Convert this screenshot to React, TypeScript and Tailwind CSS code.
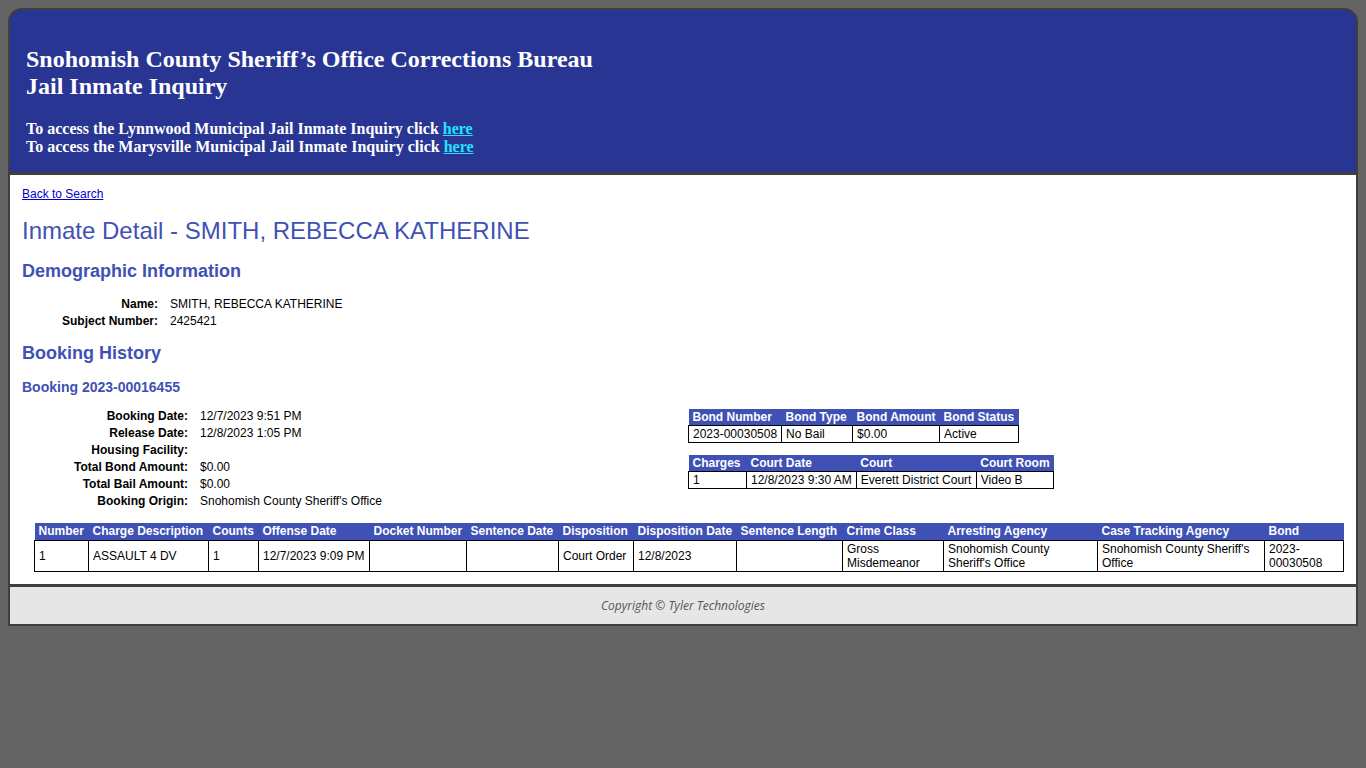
const bonds = [
  { number: "2023-00030508", type: "No Bail", amount: "$0.00", status: "Active" },
];

const courts = [
  { charges: "1", date: "12/8/2023 9:30 AM", court: "Everett District Court", room: "Video B" },
];

const chargeCols = [
  { label: "Number", w: "w-[54px]" },
  { label: "Charge Description", w: "w-[120px]" },
  { label: "Counts", w: "w-[50px]" },
  { label: "Offense Date", w: "w-[111px]" },
  { label: "Docket Number", w: "w-[97px]" },
  { label: "Sentence Date", w: "w-[92px]" },
  { label: "Disposition", w: "w-[75px]" },
  { label: "Disposition Date", w: "w-[103px]" },
  { label: "Sentence Length", w: "w-[106px]" },
  { label: "Crime Class", w: "w-[101px]" },
  { label: "Arresting Agency", w: "w-[154px]" },
  { label: "Case Tracking Agency", w: "w-[167px]" },
  { label: "Bond", w: "w-[79px]" },
];

const chargeRow = [
  "1",
  "ASSAULT 4 DV",
  "1",
  "12/7/2023 9:09 PM",
  "",
  "",
  "Court Order",
  "12/8/2023",
  "",
  "Gross Misdemeanor",
  "Snohomish County Sheriff's Office",
  "Snohomish County Sheriff's Office",
  "2023-00030508",
];

const th = "bg-[#3f51b5] text-white font-bold text-left px-[4px] leading-[16px] whitespace-nowrap";
const td = "border border-black px-[4px] leading-[14px] text-black";

function Field({ label, value, w }: { label: string; value: string; w: string }) {
  return (
    <div className="flex leading-[17px] text-xs">
      <div className={`${w} text-right font-bold shrink-0`}>{label}</div>
      <div className="pl-3">{value}</div>
    </div>
  );
}

export default function App() {
  return (
    <div className="min-h-screen bg-[#646464] pt-2 px-2" style={{ fontFamily: '"Liberation Sans", Arial, sans-serif' }}>
      <div className="border-2 border-[#3f3f3f] rounded-t-[14px] overflow-hidden bg-[#3f3f3f]">
        {/* header */}
        <header
          className="bg-[#283593] text-white px-4 pt-[36px] pb-[16px] rounded-t-[12px]"
          style={{ fontFamily: '"Liberation Serif", "Times New Roman", serif' }}
        >
          <h1 className="text-[24px] leading-[27px] font-bold">
            Snohomish County Sheriff’s Office Corrections Bureau
            <br />
            Jail Inmate Inquiry
          </h1>
          <div className="mt-[20px] text-[16px] leading-[18px] font-bold">
            <div>
              To access the Lynnwood Municipal Jail Inmate Inquiry click{" "}
              <a href="#" className="text-[#1ee3ff] underline">here</a>
            </div>
            <div>
              To access the Marysville Municipal Jail Inmate Inquiry click{" "}
              <a href="#" className="text-[#1ee3ff] underline">here</a>
            </div>
          </div>
        </header>

        {/* content */}
        <main className="bg-white mt-[3px] px-3 pt-3 pb-3 text-black">
          <a href="#" className="text-xs leading-[14px] text-[#0000cc] underline block w-fit">
            Back to Search
          </a>
          <h2 className="mt-4 text-[24px] leading-[28px] text-[#3f51b5]">
            Inmate Detail - SMITH, REBECCA KATHERINE
          </h2>

          <h3 className="mt-[15px] text-[18px] leading-[22px] font-bold text-[#3f51b5]">
            Demographic Information
          </h3>
          <div className="mt-[14px]">
            <Field label="Name:" value="SMITH, REBECCA KATHERINE" w="w-[136px]" />
            <Field label="Subject Number:" value="2425421" w="w-[136px]" />
          </div>

          <h3 className="mt-[12px] text-[18px] leading-[22px] font-bold text-[#3f51b5]">Booking History</h3>
          <h4 className="mt-[14px] text-[14px] leading-[18px] font-bold text-[#3f51b5]">
            Booking 2023-00016455
          </h4>

          <div className="mt-[12px] flex">
            <div className="w-[666px] shrink-0">
              <Field label="Booking Date:" value="12/7/2023 9:51 PM" w="w-[166px]" />
              <Field label="Release Date:" value="12/8/2023 1:05 PM" w="w-[166px]" />
              <Field label="Housing Facility:" value="" w="w-[166px]" />
              <Field label="Total Bond Amount:" value="$0.00" w="w-[166px]" />
              <Field label="Total Bail Amount:" value="$0.00" w="w-[166px]" />
              <Field label="Booking Origin:" value="Snohomish County Sheriff's Office" w="w-[166px]" />
            </div>
            <div className="pt-[1px] text-xs">
              <table className="border-collapse">
                <thead>
                  <tr>
                    <th className={`${th} w-[93px]`}>Bond Number</th>
                    <th className={`${th} w-[71px]`}>Bond Type</th>
                    <th className={`${th} w-[87px]`}>Bond Amount</th>
                    <th className={`${th} w-[79px]`}>Bond Status</th>
                  </tr>
                </thead>
                <tbody>
                  {bonds.map((b) => (
                    <tr key={b.number}>
                      <td className={`${td} leading-[16px] whitespace-nowrap`}>{b.number}</td>
                      <td className={`${td} leading-[16px] whitespace-nowrap`}>{b.type}</td>
                      <td className={`${td} leading-[16px] whitespace-nowrap`}>{b.amount}</td>
                      <td className={`${td} leading-[16px] whitespace-nowrap`}>{b.status}</td>
                    </tr>
                  ))}
                </tbody>
              </table>

              <table className="border-collapse mt-3">
                <thead>
                  <tr>
                    <th className={`${th} w-[58px]`}>Charges</th>
                    <th className={`${th} w-[109px]`}>Court Date</th>
                    <th className={`${th} w-[120px]`}>Court</th>
                    <th className={`${th} w-[77px]`}>Court Room</th>
                  </tr>
                </thead>
                <tbody>
                  {courts.map((c) => (
                    <tr key={c.date}>
                      <td className={`${td} leading-[16px]`}>{c.charges}</td>
                      <td className={`${td} leading-[16px] whitespace-nowrap`}>{c.date}</td>
                      <td className={`${td} leading-[16px] whitespace-nowrap`}>{c.court}</td>
                      <td className={`${td} leading-[16px]`}>{c.room}</td>
                    </tr>
                  ))}
                </tbody>
              </table>
            </div>
          </div>

          <table className="mt-[13px] ml-3 w-[1309px] table-fixed border-collapse text-xs">
            <thead>
              <tr>
                {chargeCols.map((c) => (
                  <th key={c.label} className={`${th} ${c.w} leading-[17px]`}>
                    {c.label}
                  </th>
                ))}
              </tr>
            </thead>
            <tbody>
              <tr>
                {chargeRow.map((v, i) => (
                  <td key={i} className={`${td} py-[1px] align-middle`}>
                    {v}
                  </td>
                ))}
              </tr>
            </tbody>
          </table>
        </main>

        {/* footer */}
        <footer
          className="bg-[#e6e6e6] mt-[3px] h-[37px] flex items-center justify-center text-xs italic text-[#555]"
          style={{ fontFamily: '"Open Sans", sans-serif' }}
        >
          Copyright © Tyler Technologies
        </footer>
      </div>
    </div>
  );
}
